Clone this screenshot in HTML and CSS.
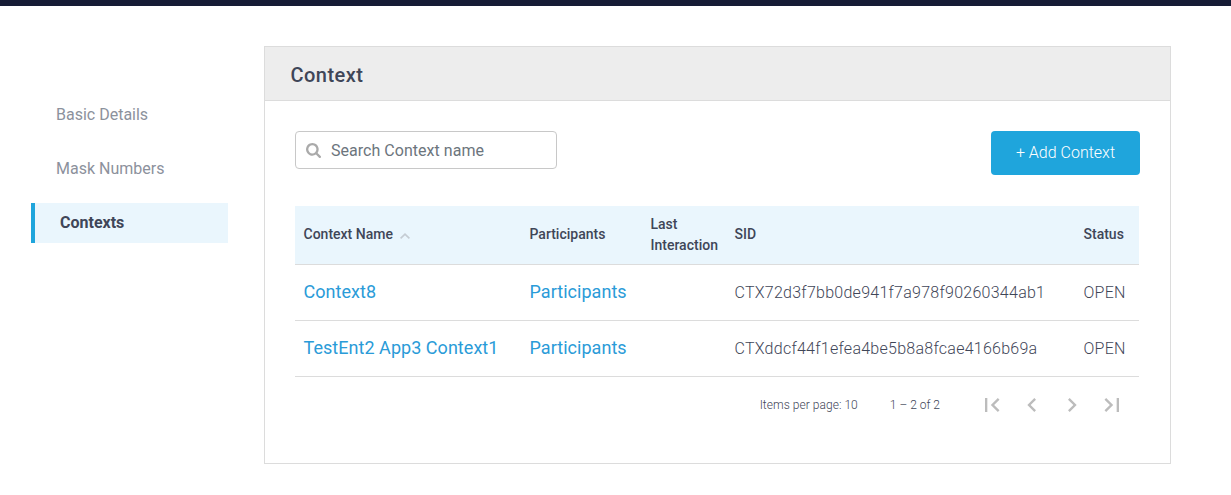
FILE: index.html
```html
<!DOCTYPE html>
<html lang="en">
<head>
<meta charset="utf-8">
<title>Contexts</title>
<link rel="stylesheet" href="styles.css">
</head>
<body>
<div class="topbar"></div>
<div class="layout">
  <nav class="sidenav">
    <a class="sidenav-item">Basic Details</a>
    <a class="sidenav-item">Mask Numbers</a>
    <a class="sidenav-item active">Contexts</a>
  </nav>
  <main class="panel">
    <h1 class="panel-title">Context</h1>
    <div class="panel-body">
      <div class="toolbar">
        <label class="search">
          <svg class="search-icon" viewBox="0 0 1664 1664" width="15" height="15"><path d="M1152 704q0-185-131.500-316.500t-316.500-131.500-316.500 131.500-131.500 316.500 131.500 316.500 316.500 131.500 316.500-131.500 131.500-316.500zM1664 1536q0 52-38 90t-90 38q-54 0-90-38l-343-342q-179 124-399 124-143 0-273.500-55.500t-225-150-150-225-55.500-273.500 55.500-273.500 150-225 225-150 273.500-55.500 273.500 55.500 225 150 150 225 55.500 273.500q0 220-124 399l343 343q37 37 37 90z"/></svg>
          <input class="search-input" type="text" placeholder="Search Context name">
        </label>
        <button class="add-button">+ Add Context</button>
      </div>
      <div class="table">
        <div class="row head">
          <div class="sorted">Context Name <svg class="sort-icon" viewBox="0 0 10 6" width="10" height="6"><path d="M.6 5.300L5 1.200l4.400 4.100"/></svg></div>
          <div>Participants</div>
          <div class="two-line">Last Interaction</div>
          <div>SID</div>
          <div>Status</div>
        </div>
        <div class="row">
          <a class="link">Context8</a>
          <a class="link">Participants</a>
          <div></div>
          <div>CTX72d3f7bb0de941f7a978f90260344ab1</div>
          <div>OPEN</div>
        </div>
        <div class="row">
          <a class="link">TestEnt2 App3 Context1</a>
          <a class="link">Participants</a>
          <div></div>
          <div>CTXddcf44f1efea4be5b8a8fcae4166b69a</div>
          <div>OPEN</div>
        </div>
      </div>
      <div class="paginator">
        <span class="page-size">Items per page: 10</span>
        <span class="page-range">1 – 2 of 2</span>
        <button class="page-button"><svg viewBox="0 0 24 24"><path d="M18.410 16.590L13.820 12l4.590-4.590L17 6l-6 6 6 6zM6 6h2v12H6z"/></svg></button>
        <button class="page-button"><svg viewBox="0 0 24 24"><path d="M15.410 7.410L14 6l-6 6 6 6 1.410-1.410L10.830 12z"/></svg></button>
        <button class="page-button"><svg viewBox="0 0 24 24"><path d="M10 6L8.590 7.410 13.170 12l-4.580 4.590L10 18l6-6z"/></svg></button>
        <button class="page-button"><svg viewBox="0 0 24 24"><path d="M5.590 7.410L10.180 12l-4.590 4.590L7 18l6-6-6-6zM16 6h2v12h-2z"/></svg></button>
      </div>
    </div>
  </main>
</div>
</body>
</html>
```
FILE: styles.css
```css
* { box-sizing: border-box; }

body {
  margin: 0;
  background: #fff;
  color: #3f4658;
  font-family: Roboto, "Liberation Sans", sans-serif;
  font-size: 16px;
  overflow: hidden;
}

.topbar { height: 6px; background: #161c35; }

.layout { display: flex; padding: 40px 60px 0 31px; }

.sidenav {
  width: 197px;
  margin-right: 36px;
  padding-top: 49px;
  display: flex;
  flex-direction: column;
  gap: 14px;
}

.sidenav-item {
  height: 40px;
  padding-left: 25px;
  line-height: 39px;
  color: #8c919c;
}

.sidenav-item.active {
  border-left: 4px solid #1fa5dc;
  background: #eaf6fd;
  color: #3f4658;
  font-weight: 700;
}

.panel { flex: 1; height: 418px; border: 1px solid #dcdcdc; }

.panel-title {
  height: 54px;
  margin: 0;
  padding-left: 25.500px;
  border-bottom: 1px solid #dcdcdc;
  background: #ededed;
  font-size: 20px;
  font-weight: 500;
  line-height: 56px;
  letter-spacing: 0.45px;
}

.panel-body { padding: 30px; }

.toolbar {
  display: flex;
  justify-content: space-between;
  align-items: flex-start;
  height: 75px;
}

.search {
  display: flex;
  align-items: center;
  gap: 10px;
  width: 262px;
  height: 38px;
  padding: 0 10px;
  border: 1px solid #c8c8c8;
  border-radius: 4px;
}

.search-icon { flex: none; fill: #aaa; }

.search-input {
  flex: 1;
  min-width: 0;
  padding: 0;
  border: 0;
  outline: 0;
  background: none;
  font: inherit;
  letter-spacing: 0.03px;
}

.search-input::placeholder { color: #6c757d; }

.add-button {
  width: 149px;
  height: 44px;
  padding: 0 0 2px;
  border: 0;
  border-radius: 4px;
  background: #1fa5dc;
  color: #fff;
  font: 300 16px Roboto, sans-serif;
}

.table { width: 844px; }

.row {
  display: grid;
  grid-template-columns: 226px 121px 84px 349px 1fr;
  align-items: center;
  height: 56px;
  padding-left: 8.500px;
  border-bottom: 1px solid #dcdcdc;
  font-weight: 300;
  letter-spacing: 0.260px;
}

.row.head {
  height: 59px;
  background: #eaf6fd;
  font-size: 14px;
  font-weight: 500;
  line-height: 21px;
  letter-spacing: 0;
}

.row.head > :not(.two-line) { padding-bottom: 2px; }

.sorted { display: flex; align-items: center; gap: 7px; }

.sort-icon {
  margin-top: 3px;
  fill: none;
  stroke: #c5ccd3;
  stroke-width: 1.700;
}

.link {
  padding-bottom: 2px;
  color: #2a9bd8;
  font-size: 18px;
  font-weight: 400;
  letter-spacing: 0.04px;
}

.paginator {
  display: flex;
  align-items: center;
  justify-content: flex-end;
  height: 56px;
  padding-right: 8px;
  font-size: 12px;
  font-weight: 300;
}

.page-size { margin-right: 32px; letter-spacing: 0.04px; }
.page-range { margin-right: 32px; }

.page-button {
  display: flex;
  align-items: center;
  justify-content: center;
  width: 40px;
  height: 40px;
  padding: 0;
  border: 0;
  background: none;
}

.page-button svg { width: 28px; height: 28px; fill: #bcbcbc; }
```
